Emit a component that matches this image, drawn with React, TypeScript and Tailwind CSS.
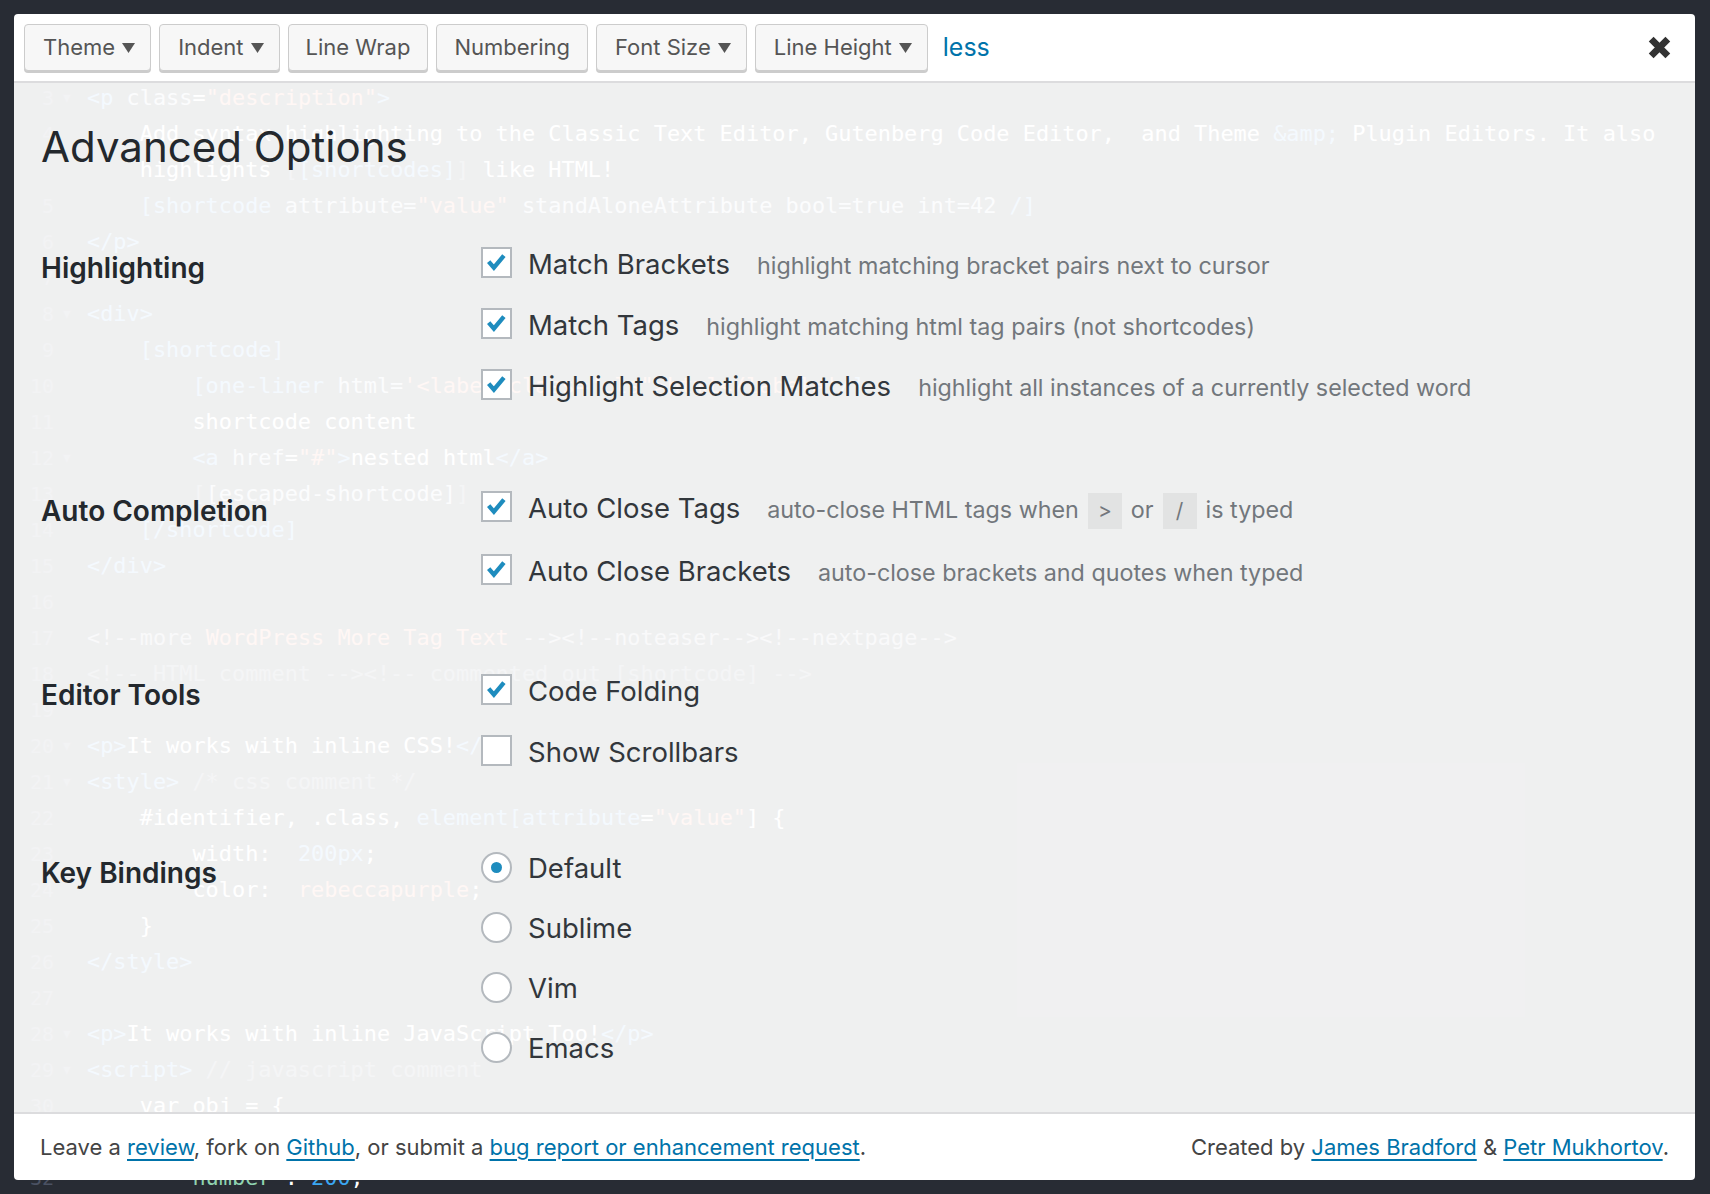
import type { ReactNode } from 'react'

type Tok = 'tag' | 'str' | 'txt' | 'attr' | 'com' | 'dim' | 'num' | 'prop'
type Seg = [string, Tok]

const TOK: Record<Tok, string> = {
  tag: 'text-[#61afef]',
  str: 'text-[#f78c6c]',
  txt: 'text-[#ffffff]',
  attr: 'text-[#c8d3e0]',
  com: 'text-[#a3aab5]',
  dim: 'text-[#6b7280]',
  num: 'text-[#3ba8f3]',
  prop: 'text-[#8fd3b0]',
}

// editor rows behind the overlay (line 4 wraps, so it takes two rows)
const CODE: { n?: number; fold?: boolean; segs: Seg[] }[] = [
  { n: 1, fold: true, segs: [['<h2>', 'tag'], ['Syntax Highlighting', 'txt'], ['</h2>', 'tag']] },
  { n: 2, segs: [] },
  { n: 3, fold: true, segs: [['<p ', 'tag'], ['class', 'attr'], ['=', 'txt'], ['"description"', 'str'], ['>', 'tag']] },
  {
    n: 4,
    segs: [
      ['    Add syntax highlighting to the Classic Text Editor, Gutenberg Code Editor,  and Theme ', 'txt'],
      ['&amp;', 'tag'],
      [' Plugin Editors. It also', 'txt'],
    ],
  },
  { segs: [['    highlights ', 'txt'], ['[', 'dim'], ['[shortcodes]', 'tag'], [']', 'dim'], [' like HTML!', 'txt']] },
  {
    n: 5,
    segs: [
      ['    [shortcode ', 'tag'],
      ['attribute=', 'attr'],
      ['"value"', 'str'],
      [' standAloneAttribute bool=true int=42 ', 'attr'],
      ['/]', 'tag'],
    ],
  },
  { n: 6, segs: [['</p>', 'tag']] },
  { n: 7, segs: [] },
  { n: 8, fold: true, segs: [['<div>', 'tag']] },
  { n: 9, segs: [['    [shortcode]', 'tag']] },
  {
    n: 10,
    segs: [
      ['        [one-liner ', 'tag'],
      ['html=', 'attr'],
      ['\'<label class="cls">html</label>\'', 'str'],
      ['/]', 'tag'],
    ],
  },
  { n: 11, segs: [['        shortcode content', 'txt']] },
  { n: 12, fold: true, segs: [['        <a ', 'tag'], ['href', 'attr'], ['=', 'txt'], ['"#"', 'str'], ['>', 'tag'], ['nested html', 'txt'], ['</a>', 'tag']] },
  { n: 13, segs: [['        ', 'txt'], ['[', 'dim'], ['[escaped-shortcode]', 'attr'], [']', 'dim']] },
  { n: 14, segs: [['    [/shortcode]', 'tag']] },
  { n: 15, segs: [['</div>', 'tag']] },
  { n: 16, segs: [] },
  {
    n: 17,
    segs: [['<!--more ', 'com'], ['WordPress More Tag Text', 'str'], [' --><!--noteaser--><!--nextpage-->', 'com']],
  },
  { n: 18, segs: [['<!-- HTML comment --><!-- commented out [shortcode] -->', 'dim']] },
  { n: 19, segs: [] },
  { n: 20, fold: true, segs: [['<p>', 'tag'], ['It works with inline CSS!', 'txt'], ['</p>', 'tag']] },
  { n: 21, fold: true, segs: [['<style>', 'tag'], [' /* css comment */', 'dim']] },
  {
    n: 22,
    segs: [
      ['    #identifier, .class, ', 'txt'],
      ['element[attribute', 'tag'],
      ['=', 'txt'],
      ['"value"', 'str'],
      ['] {', 'txt'],
    ],
  },
  { n: 23, segs: [['        width:  ', 'txt'], ['200px', 'tag'], [';', 'txt']] },
  { n: 24, segs: [['        color:  ', 'txt'], ['rebeccapurple', 'str'], [';', 'txt']] },
  { n: 25, segs: [['    }', 'txt']] },
  { n: 26, segs: [['</style>', 'tag']] },
  { n: 27, segs: [] },
  { n: 28, fold: true, segs: [['<p>', 'tag'], ['It works with inline JavaScript Too!', 'txt'], ['</p>', 'tag']] },
  { n: 29, fold: true, segs: [['<script>', 'tag'], [' // javascript comment', 'dim']] },
  { n: 30, segs: [['    var obj = {', 'txt']] },
  { n: 31, segs: [['        string : ', 'prop'], ['"string"', 'str'], [',', 'txt']] },
  { n: 32, segs: [['        number', 'prop'], [' : ', 'txt'], ['200', 'num'], [';', 'txt']] },
]

function CodeBackdrop() {
  return (
    <div className="pt-[8px] font-['DejaVu_Sans_Mono',monospace]">
      {CODE.map((row, i) => (
        <div key={i} className="flex h-[36px] items-center whitespace-pre">
          <span className="w-[54px] flex-none text-right text-[20px] text-[#4b5263]">{row.n ?? ''}</span>
          <span className="w-[33px] flex-none pl-[9px] text-[13px] text-[#4b5263]">{row.fold ? '▼' : ''}</span>
          <span className="text-[21.9px]">
            {row.segs.map(([t, k], j) => (
              <span key={j} className={TOK[k]}>
                {t}
              </span>
            ))}
          </span>
        </div>
      ))}
    </div>
  )
}

function Caret() {
  return (
    <svg viewBox="0 0 13 10" className="ml-[7px] h-[10px] w-[13px]">
      <polygon points="0,0 13,0 6.5,10" fill="#555555" />
    </svg>
  )
}

function ToolButton({ label, menu }: { label: string; menu?: boolean }) {
  return (
    <button
      className={`flex h-[47px] items-center rounded-[4px] border border-[#cccccc] bg-[#f7f7f7] text-[22px] text-[#555555] shadow-[0_2px_0_#cccccc] ${menu ? 'pl-[18px] pr-[15px]' : 'px-[17px]'}`}
    >
      {label}
      {menu && <Caret />}
    </button>
  )
}

function Check({ on }: { on: boolean }) {
  return (
    <span className="mb-[5px] flex h-[31px] w-[31px] flex-none items-center justify-center border-2 border-[#b4b9be] bg-white">
      {on && (
        <svg viewBox="0 0 31 31" className="h-[31px] w-[31px]">
          <path d="M6.5 14.5 L12.5 21.5 L24 7.5" fill="none" stroke="#1e8cbe" strokeWidth={5} />
        </svg>
      )}
    </span>
  )
}

function Radio({ on }: { on: boolean }) {
  return (
    <span className="mb-[3px] flex h-[31px] w-[31px] flex-none items-center justify-center rounded-full border-2 border-[#b4b9be] bg-white">
      {on && <span className="h-[11px] w-[11px] rounded-full bg-[#1e8cbe]" />}
    </span>
  )
}

function Option({ label, desc, on, radio, tall }: { label: string; desc?: ReactNode; on: boolean; radio?: boolean; tall?: boolean }) {
  return (
    <div className={`flex items-center ${tall ? 'h-[64px]' : radio ? 'h-[60px]' : 'h-[61px]'}`}>
      {radio ? <Radio on={on} /> : <Check on={on} />}
      <span className="ml-[16px] text-[27.5px] text-[#32373c]">{label}</span>
      {desc && <span className="ml-[27px] flex items-center pt-[3px] text-[23.3px] text-[#72777c]">{desc}</span>}
    </div>
  )
}

function Key({ children }: { children: ReactNode }) {
  return (
    <span className="mx-[9px] flex h-[36px] w-[34px] items-center justify-center bg-[rgba(0,0,0,0.05)] text-[21px]">
      {children}
    </span>
  )
}

function Section({ title, gap, children }: { title: string; gap: string; children: ReactNode }) {
  return (
    <div className={`grid grid-cols-[440px_1fr] ${gap}`}>
      <h3 className="flex h-[61px] items-center pt-[6px] text-[28px] font-semibold text-[#23282d]">{title}</h3>
      <div className="flex flex-col">{children}</div>
    </div>
  )
}

function A({ children }: { children: ReactNode }) {
  return <a className="text-[#0073aa] underline decoration-[1.5px] underline-offset-[4px]">{children}</a>
}

export default function App() {
  return (
    <div className="relative h-[1194px] w-[1710px] overflow-hidden bg-[#282c34]">
      <CodeBackdrop />

      <div className="absolute left-[14px] top-[14px] flex h-[1166px] w-[1681px] flex-col overflow-hidden rounded-[4px] font-['Inter',sans-serif]">
        <div className="flex h-[69px] flex-none items-center gap-[8px] border-b-2 border-[#dcdcde] bg-white pl-[10px] pr-[23px]">
          <ToolButton label="Theme" menu />
          <ToolButton label="Indent" menu />
          <ToolButton label="Line Wrap" />
          <ToolButton label="Numbering" />
          <ToolButton label="Font Size" menu />
          <ToolButton label="Line Height" menu />
          <a className="ml-[7px] text-[25px] text-[#0073aa]">less</a>
          <svg viewBox="0 0 24 24" className="ml-auto h-[25px] w-[25px]">
            <path d="M4 4 L20 20 M20 4 L4 20" stroke="#333333" strokeWidth={6.5} />
          </svg>
        </div>

        <div className="flex-1 bg-[rgba(255,255,255,0.93)] px-[27px]">
          <h1 className="mt-[38px] text-[42px] leading-[52px] text-[#23282d]">Advanced Options</h1>

          <Section title="Highlighting" gap="mt-[61px]">
            <Option on label="Match Brackets" desc="highlight matching bracket pairs next to cursor" />
            <Option on label="Match Tags" desc="highlight matching html tag pairs (not shortcodes)" />
            <Option on label="Highlight Selection Matches" desc="highlight all instances of a currently selected word" />
          </Section>

          <Section title="Auto Completion" gap="mt-[60px]">
            <Option
              on
              tall
              label="Auto Close Tags"
              desc={
                <>
                  auto-close HTML tags when<Key>&gt;</Key>or<Key>/</Key>is typed
                </>
              }
            />
            <Option on label="Auto Close Brackets" desc="auto-close brackets and quotes when typed" />
          </Section>

          <Section title="Editor Tools" gap="mt-[59px]">
            <Option on label="Code Folding" />
            <Option on={false} label="Show Scrollbars" />
          </Section>

          <Section title="Key Bindings" gap="mt-[56px]">
            <Option radio on label="Default" />
            <Option radio on={false} label="Sublime" />
            <Option radio on={false} label="Vim" />
            <Option radio on={false} label="Emacs" />
          </Section>
        </div>

        <div className="flex h-[68px] flex-none items-center justify-between border-t-2 border-[#dcdcde] bg-white px-[26px] text-[22px] text-[#444444]">
          <p>
            Leave a <A>review</A>, fork on <A>Github</A>, or submit a <A>bug report or enhancement request</A>.
          </p>
          <p>
            Created by <A>James Bradford</A> &amp; <A>Petr Mukhortov</A>.
          </p>
        </div>
      </div>
    </div>
  )
}
